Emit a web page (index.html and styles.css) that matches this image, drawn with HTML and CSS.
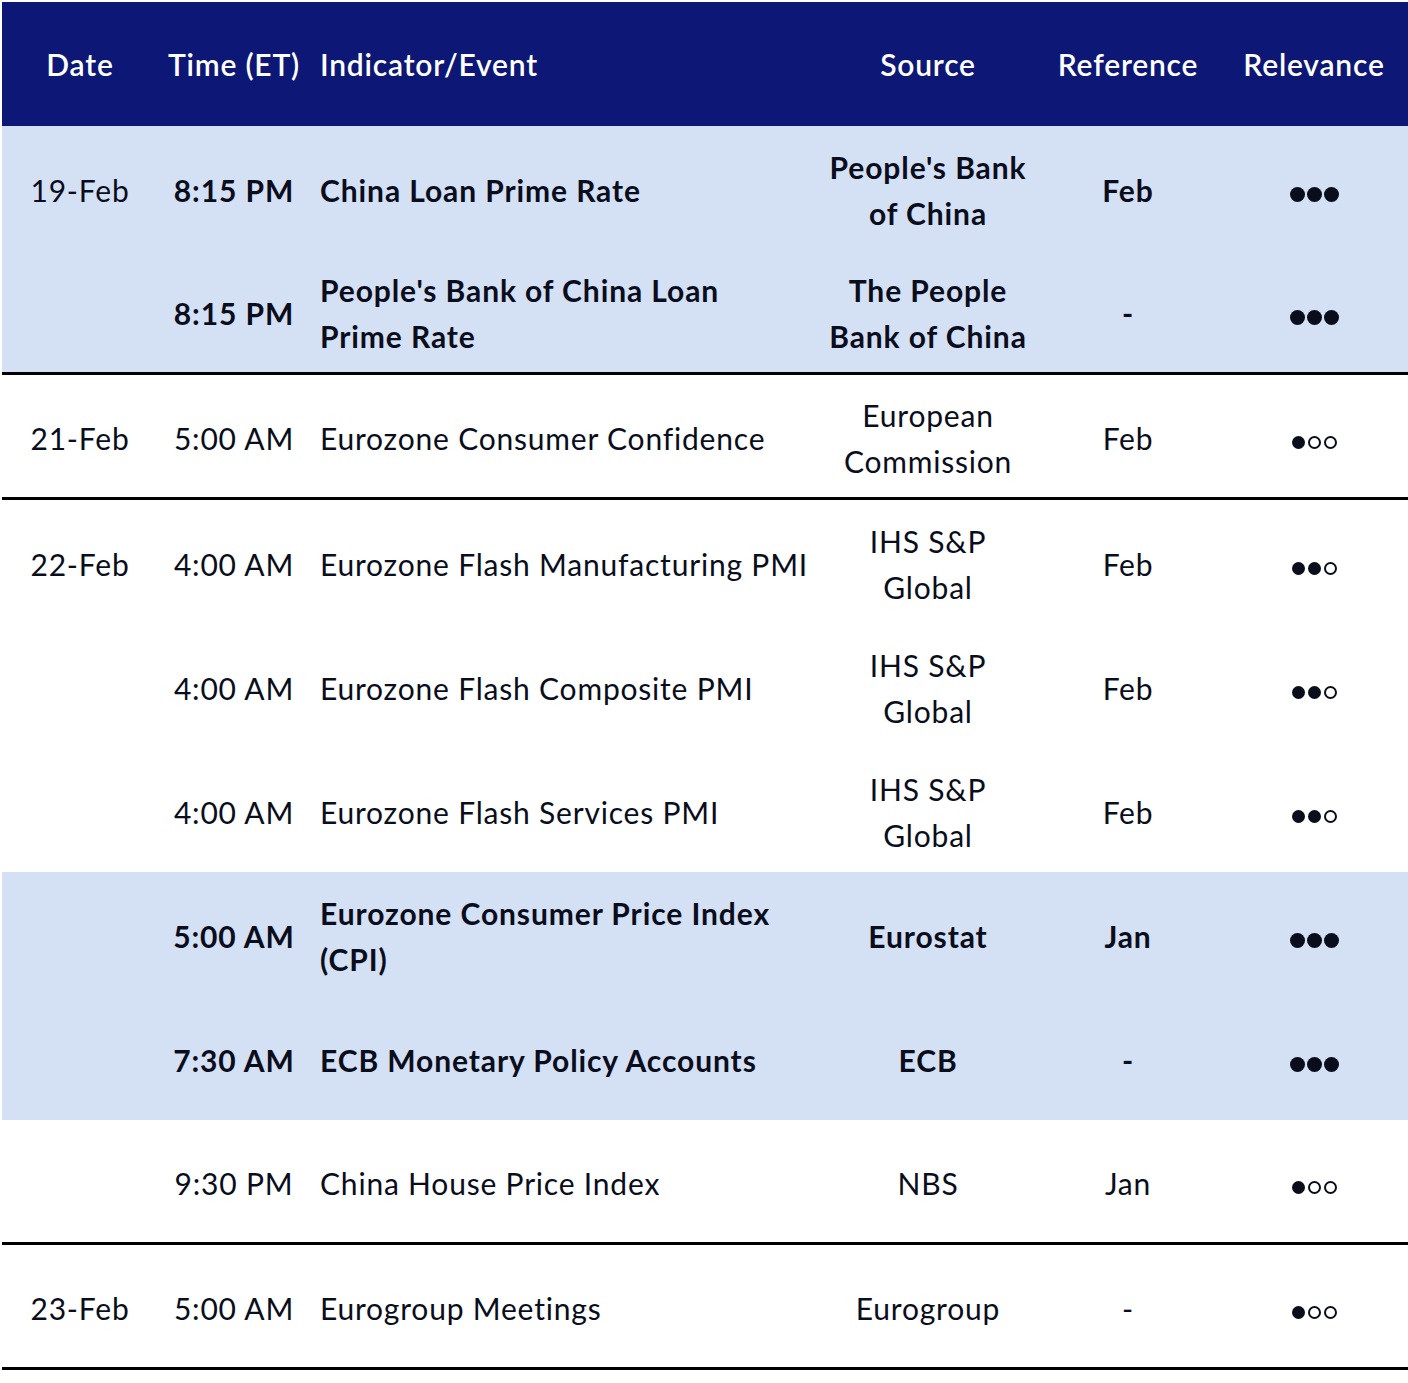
FILE: index.html
```html
<!DOCTYPE html>
<html lang="en">
<head>
<meta charset="utf-8">
<title>Economic Calendar</title>
<link rel="stylesheet" href="styles.css">
</head>
<body>
<table class="cal">
  <colgroup>
    <col class="c-date"><col class="c-time"><col class="c-ind"><col class="c-src"><col class="c-ref"><col class="c-rel">
  </colgroup>
  <thead>
    <tr>
      <th>Date</th><th>Time (ET)</th><th class="left">Indicator/Event</th><th>Source</th><th>Reference</th><th>Relevance</th>
    </tr>
  </thead>
  <tbody>
    <tr class="hi">
      <td class="date">19-Feb</td><td>8:15 PM</td><td class="left">China Loan Prime Rate</td><td>People's Bank<br>of China</td><td>Feb</td>
      <td><span class="dots big"><i class="f"></i><i class="f"></i><i class="f"></i></span></td>
    </tr>
    <tr class="hi end">
      <td class="date"></td><td>8:15 PM</td><td class="left">People's Bank of China Loan<br>Prime Rate</td><td>The People<br>Bank of China</td><td>-</td>
      <td><span class="dots big"><i class="f"></i><i class="f"></i><i class="f"></i></span></td>
    </tr>
    <tr class="end">
      <td class="date">21-Feb</td><td>5:00 AM</td><td class="left">Eurozone Consumer Confidence</td><td>European<br>Commission</td><td>Feb</td>
      <td><span class="dots"><i class="f"></i><i class="o"></i><i class="o"></i></span></td>
    </tr>
    <tr>
      <td class="date">22-Feb</td><td>4:00 AM</td><td class="left">Eurozone Flash Manufacturing PMI</td><td>IHS S&amp;P<br>Global</td><td>Feb</td>
      <td><span class="dots"><i class="f"></i><i class="f"></i><i class="o"></i></span></td>
    </tr>
    <tr>
      <td class="date"></td><td>4:00 AM</td><td class="left">Eurozone Flash Composite PMI</td><td>IHS S&amp;P<br>Global</td><td>Feb</td>
      <td><span class="dots"><i class="f"></i><i class="f"></i><i class="o"></i></span></td>
    </tr>
    <tr>
      <td class="date"></td><td>4:00 AM</td><td class="left">Eurozone Flash Services PMI</td><td>IHS S&amp;P<br>Global</td><td>Feb</td>
      <td><span class="dots"><i class="f"></i><i class="f"></i><i class="o"></i></span></td>
    </tr>
    <tr class="hi">
      <td class="date"></td><td>5:00 AM</td><td class="left">Eurozone Consumer Price Index<br>(CPI)</td><td>Eurostat</td><td>Jan</td>
      <td><span class="dots big"><i class="f"></i><i class="f"></i><i class="f"></i></span></td>
    </tr>
    <tr class="hi">
      <td class="date"></td><td>7:30 AM</td><td class="left">ECB Monetary Policy Accounts</td><td>ECB</td><td>-</td>
      <td><span class="dots big"><i class="f"></i><i class="f"></i><i class="f"></i></span></td>
    </tr>
    <tr class="end">
      <td class="date"></td><td>9:30 PM</td><td class="left">China House Price Index</td><td>NBS</td><td>Jan</td>
      <td><span class="dots"><i class="f"></i><i class="o"></i><i class="o"></i></span></td>
    </tr>
    <tr class="end">
      <td class="date">23-Feb</td><td>5:00 AM</td><td class="left">Eurogroup Meetings</td><td>Eurogroup</td><td>-</td>
      <td><span class="dots"><i class="f"></i><i class="o"></i><i class="o"></i></span></td>
    </tr>
  </tbody>
</table>
</body>
</html>
```

FILE: styles.css
```css
html, body {
  margin: 0;
  padding: 0;
  background: #ffffff;
}

body {
  padding: 2px 0 0 2px;
  font-family: "Lato", "Open Sans", "Liberation Sans", sans-serif;
  color: #0a0d1c;
}

.cal {
  border-collapse: collapse;
  table-layout: fixed;
  width: 1406px;
}

.c-date { width: 156px; }
.c-time { width: 152px; }
.c-ind  { width: 510px; }
.c-src  { width: 216px; }
.c-ref  { width: 184px; }
.c-rel  { width: 188px; }

.cal th,
.cal td {
  padding: 0;
  text-align: center;
  vertical-align: middle;
  font-size: 30px;
  line-height: 46px;
  letter-spacing: 0.8px;
  white-space: nowrap;
}

.cal th {
  height: 124px;
  background: #0d1775;
  color: #ffffff;
  font-weight: 600;
}

.cal td {
  height: 121px;
  padding-top: 3px;
  font-weight: 400;
}

.cal .left {
  text-align: left;
  padding-left: 10px;
}

.cal tr.hi td {
  background: #d4e0f4;
  font-weight: 700;
  letter-spacing: 0.9px;
}

.cal tr.hi td.date {
  font-weight: 400;
  letter-spacing: 0.8px;
}

.cal tr.end td {
  height: 119px;
  border-bottom: 3px solid #000000;
}

.dots {
  display: inline-flex;
  align-items: center;
  gap: 3px;
  vertical-align: middle;
  position: relative;
  top: 1px;
}

.dots i {
  display: block;
  width: 13px;
  height: 13px;
  border-radius: 50%;
  box-sizing: border-box;
}

.dots i.f {
  background: #0a0d1c;
}

.dots i.o {
  border: 2px solid #0a0d1c;
}

.dots.big {
  gap: 2px;
}

.dots.big i {
  width: 15px;
  height: 15px;
}
```
